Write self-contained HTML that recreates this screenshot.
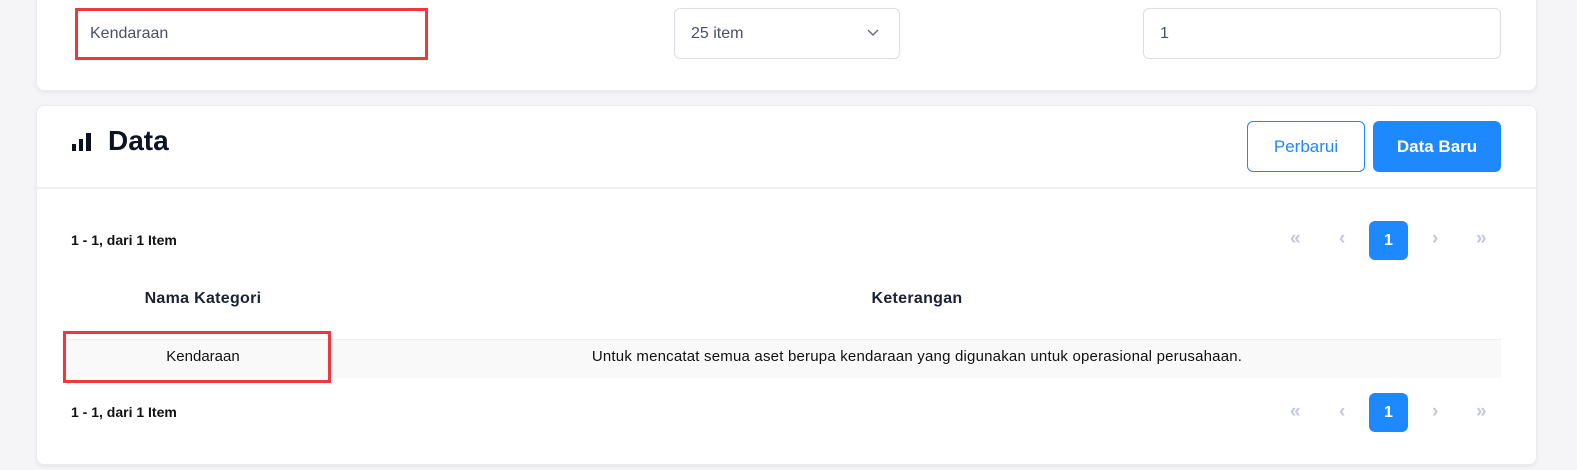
<!DOCTYPE html><html><head><style>
*{box-sizing:border-box;margin:0;padding:0}
body{width:1577px;height:470px;background:#f5f5f7;font-family:"Liberation Sans",sans-serif;position:relative;overflow:hidden}
.a{position:absolute}
.card{background:#fff;border:1px solid #ececf0;border-radius:8px;box-shadow:0 2px 4px rgba(0,0,0,.06)}
.inp{background:#fff;border:1px solid #dcdcea;border-radius:6px;font-size:16px;color:#4a5068;padding-left:16px;display:flex;align-items:center}
.pg{font-size:14px;font-weight:bold;color:#111}
.pb{width:39px;height:39px;border-radius:6px;background:#1e88ff;color:#fff;font-weight:bold;font-size:16px;display:flex;align-items:center;justify-content:center}
.ar{color:#c5c8d8;font-size:19px;font-weight:bold}
</style></head><body>
<div class="a card" style="left:36px;top:-10px;width:1501px;height:101px"></div>
<div class="a inp" style="left:75px;top:8px;width:353px;height:52px;border:3px solid #f0383c;border-radius:0;padding-left:12px">Kendaraan</div>
<div class="a inp" style="left:674px;top:8px;width:226px;height:51px">25 item<svg class="a" style="left:192px;top:20px" width="12" height="8" viewBox="0 0 12 8"><path d="M1 1l5 5 5-5" fill="none" stroke="#667" stroke-width="1.4"/></svg></div>
<div class="a inp" style="left:1143px;top:8px;width:358px;height:51px">1</div>

<div class="a card" style="left:36px;top:105px;width:1501px;height:360px"></div>
<div class="a" style="left:37px;top:187px;width:1499px;height:2px;background:#efeff2"></div>
<svg class="a" style="left:72px;top:133px" width="20" height="19"><rect x="0" y="11" width="4" height="7" fill="#0b1020"/><rect x="7" y="6" width="4" height="12" fill="#0b1020"/><rect x="14" y="0" width="5" height="18" fill="#0b1020"/></svg>
<div class="a" style="left:108px;top:125px;font-size:28px;font-weight:bold;color:#0b1326">Data</div>
<div class="a" style="left:1247px;top:121px;width:118px;height:51px;border:1px solid #1e88ff;border-radius:6px;color:#1e88ff;font-size:17px;display:flex;align-items:center;justify-content:center">Perbarui</div>
<div class="a" style="left:1373px;top:121px;width:128px;height:51px;background:#1e88ff;border-radius:6px;color:#fff;font-size:17px;font-weight:bold;display:flex;align-items:center;justify-content:center">Data Baru</div>

<div class="a pg" style="left:71px;top:232px">1 - 1, dari 1 Item</div>
<div class="a ar" style="left:1290px;top:228px">«</div><div class="a ar" style="left:1339px;top:228px">‹</div>
<div class="a pb" style="left:1369px;top:221px">1</div>
<div class="a ar" style="left:1432px;top:228px">›</div><div class="a ar" style="left:1476px;top:228px">»</div>

<div class="a" style="left:62px;top:290px;width:282px;text-align:center;font-size:16px;font-weight:bold;color:#1b2236;letter-spacing:.3px">Nama Kategori</div>
<div class="a" style="left:344px;top:290px;width:1146px;text-align:center;font-size:16px;font-weight:bold;color:#1b2236;letter-spacing:.3px">Keterangan</div>
<div class="a" style="left:62px;top:339px;width:1439px;height:39px;background:#f9f9f9;border-top:1px solid #eee"></div>
<div class="a" style="left:63px;top:331px;width:268px;height:52px;border:3px solid #f0383c"></div>
<div class="a" style="left:63px;top:348px;width:280px;text-align:center;font-size:15px;color:#111">Kendaraan</div>
<div class="a" style="left:344px;top:348px;width:1146px;text-align:center;font-size:15px;color:#111;letter-spacing:.2px">Untuk mencatat semua aset berupa kendaraan yang digunakan untuk operasional perusahaan.</div>

<div class="a pg" style="left:71px;top:404px">1 - 1, dari 1 Item</div>
<div class="a ar" style="left:1290px;top:401px">«</div><div class="a ar" style="left:1339px;top:401px">‹</div>
<div class="a pb" style="left:1369px;top:393px">1</div>
<div class="a ar" style="left:1432px;top:401px">›</div><div class="a ar" style="left:1476px;top:401px">»</div>
</body></html>
